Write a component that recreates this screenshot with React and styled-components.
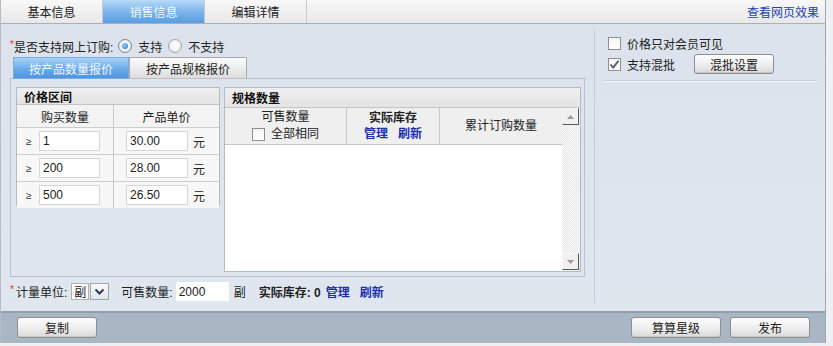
import React from 'react';
import styled, { createGlobalStyle, css } from 'styled-components';

const Global = createGlobalStyle`
  html, body { margin: 0; padding: 0; background: #eef0f3; }
  body {
    font-family: "Liberation Sans", "Noto Sans CJK SC", sans-serif;
    font-size: 12px;
    color: #222;
  }
  * { box-sizing: border-box; }
`;

const Frame = styled.div`
  width: 826px;
  height: 343px;
  display: flex;
  flex-direction: column;
  background: linear-gradient(#dbe2ec, #e1e7ef);
  border-left: 1px solid #b4bcc6;
  border-right: 1px solid #9ea8b3;
`;

const TabBar = styled.div`
  height: 24px;
  display: flex;
  background: linear-gradient(#f8f8f8, #e8e8e8);
  border-bottom: 1px solid #a9b0b8;
`;

const Tab = styled.div`
  width: 102px;
  display: flex;
  align-items: center;
  justify-content: center;
  font-size: 12px;
  border-right: 1px solid #c9c9c9;
  color: #222;
  ${(p) =>
    p.$active &&
    css`
      background: linear-gradient(#b8daf8, #78b2ea 55%, #5a9de2);
      color: #eef6ff;
    `}
`;

const ViewLink = styled.a`
  margin-left: auto;
  padding-right: 6px;
  align-self: center;
  color: #2342b0;
  text-decoration: none;
  font-size: 12px;
`;

const Body = styled.div`
  flex: 1;
  display: flex;
`;

const LeftPane = styled.div`
  width: 594px;
  margin: 6px 0 8px 0;
  padding: 7px 0 0 9px;
  border-right: 1px solid #c3cbd4;
  display: flex;
  flex-direction: column;
`;

const Row = styled.div`
  display: flex;
  align-items: center;
  height: ${(p) => p.$h || 18}px;
  margin-top: ${(p) => p.$mt || 0}px;
  white-space: nowrap;
`;

const Star = styled.span`
  color: #e0362c;
  font-size: 10px;
  align-self: flex-start;
  margin-top: 2px;
  width: ${(p) => p.$w || 4}px;
`;

const Text = styled.span`
  margin-left: ${(p) => p.$ml || 0}px;
  font-weight: ${(p) => (p.$bold ? 'bold' : 'normal')};
  color: ${(p) => p.$color || 'inherit'};
`;

const RadioDot = styled.span`
  display: inline-block;
  width: 14px;
  height: 14px;
  border-radius: 50%;
  border: 1px solid ${(p) => (p.$on ? '#6f8aa3' : '#a3a3a3')};
  background: radial-gradient(circle at 50% 40%, #ffffff, #e4e4e4);
  position: relative;
  margin-left: ${(p) => p.$ml || 0}px;
  ${(p) =>
    p.$on &&
    css`
      &::after {
        content: '';
        position: absolute;
        left: 3px;
        top: 3px;
        width: 6px;
        height: 6px;
        border-radius: 50%;
        background: radial-gradient(circle at 40% 35%, #8fd0ff, #1e78d0);
      }
    `}
`;

const SegTabs = styled.div`
  display: flex;
  margin-top: 2px;
  margin-left: 3px;
  height: 22px;
  position: relative;
  z-index: 1;
`;

const Seg = styled.div`
  width: ${(p) => p.$w}px;
  display: flex;
  align-items: center;
  justify-content: center;
  font-size: 12px;
  ${(p) =>
    p.$active
      ? css`
          background: linear-gradient(#a8d2f7, #6aaaea 55%, #4f94dc);
          color: #eef6ff;
          border: 1px solid #7aaee0;
        `
      : css`
          background: linear-gradient(#fbfbfb, #ececec 55%, #dcdcdc);
          border: 1px solid #a9a9a9;
          border-bottom-color: #c0c0c0;
          border-radius: 0 2px 0 0;
          color: #222;
        `}
`;

const Box = styled.div`
  width: 575px;
  height: 199px;
  border: 1px solid #bac2cb;
  margin-top: -1px;
  padding: 8px 3px 4px 5px;
  display: flex;
  align-items: flex-start;
  gap: 4px;
`;

const Table = styled.div`
  width: ${(p) => p.$w}px;
  height: ${(p) => p.$h}px;
  border: 1px solid #b5bbc2;
  display: flex;
  flex-direction: column;
  background: ${(p) => p.$bg || '#f6f6f6'};
`;

const TableTitle = styled.div`
  height: ${(p) => p.$h}px;
  flex: none;
  background: linear-gradient(#efefef, #e4e4e4);
  border-bottom: 1px solid #c4c4c4;
  font-weight: bold;
  padding-left: ${(p) => p.$pl}px;
  display: flex;
  align-items: center;
  color: #111;
`;

const PriceGrid = styled.div`
  display: grid;
  grid-template-columns: 97px 1fr;
  grid-auto-rows: ${(p) => p.$h}px;
  background: ${(p) => p.$bg};
  border-bottom: ${(p) => (p.$last ? 'none' : '1px solid #cdcdcd')};
`;

const Cell = styled.div`
  display: flex;
  align-items: center;
  justify-content: ${(p) => (p.$center ? 'center' : 'flex-start')};
  padding-left: ${(p) => p.$pl || 0}px;
  border-right: ${(p) => (p.$div ? '1px solid #c8c8c8' : 'none')};
`;

const Ge = styled.span`
  font-size: 10px;
  width: 13px;
  color: #333;
`;

const Input = styled.input`
  width: ${(p) => p.$w}px;
  height: ${(p) => p.$h || 20}px;
  border: 1px solid #d6d6d6;
  background: #fff;
  font-family: "Liberation Sans", sans-serif;
  font-size: 12px;
  color: #222;
  padding: 0 3px;
  outline: none;
  margin: 0;
`;

const Unit = styled.span`
  margin-left: ${(p) => p.$ml || 5}px;
`;

const SpecBody = styled.div`
  flex: 1;
  display: flex;
`;

const SpecCols = styled.div`
  flex: 1;
  display: flex;
  flex-direction: column;
`;

const ColHeads = styled.div`
  height: 37px;
  display: grid;
  grid-template-columns: 122px 93px 1fr;
  background: #efefef;
  border-bottom: 1px solid #c6c6c6;
`;

const HeadCell = styled.div`
  display: flex;
  flex-direction: column;
  align-items: center;
  justify-content: center;
  border-right: ${(p) => (p.$div ? '1px solid #c8c8c8' : 'none')};
  line-height: 16px;
`;

const Links = styled.span`
  display: flex;
  gap: 10px;
  color: #1b2fae;
  font-weight: bold;
`;

const Check = styled.span`
  display: inline-flex;
  width: 13px;
  height: 13px;
  border: 1px solid #8f8f8f;
  background: linear-gradient(#f4f4f4, #ffffff);
  margin-right: ${(p) => p.$mr || 5}px;
  align-items: center;
  justify-content: center;
`;

const Scroll = styled.div`
  width: 18px;
  display: flex;
  flex-direction: column;
  justify-content: space-between;
  background-color: #f6f6f6;
  background-image: repeating-conic-gradient(#e6e6e6 0% 25%, #fbfbfb 0% 50%);
  background-size: 2px 2px;
  padding-bottom: 1px;
`;

const ScrollBtn = styled.div`
  width: 17px;
  height: 17px;
  background: #f0f0f0;
  border: 1px solid #f8f8f8;
  border-right-color: #5a5a5a;
  border-bottom-color: #5a5a5a;
  display: flex;
  align-items: center;
  justify-content: center;
`;

const SelectWrap = styled.span`
  display: inline-flex;
  height: 17px;
  margin-left: 4px;
`;

const SelectVal = styled.span`
  width: 18px;
  background: #fff;
  border: 1px solid #b0b0b0;
  display: flex;
  align-items: center;
  justify-content: center;
`;

const SelectBtn = styled.span`
  width: 19px;
  margin-left: 1px;
  border: 1px solid #9aa6b3;
  background: linear-gradient(#fafafa, #e2e6ea);
  display: flex;
  align-items: center;
  justify-content: center;
`;

const RightPane = styled.div`
  flex: 1;
  padding: 12px 0 0 13px;
  display: flex;
  flex-direction: column;
`;

const Etched = styled.div`
  margin-top: 6px;
  margin-left: -4px;
  width: 213px;
  height: 2px;
  border-top: 1px solid #c4ccd5;
  border-bottom: 1px solid #f4f6f9;
`;

const Button = styled.button`
  width: ${(p) => p.$w}px;
  height: ${(p) => p.$h || 21}px;
  margin-left: ${(p) => p.$ml || 0}px;
  border: 1px solid #8b8f94;
  border-radius: 3px;
  background: linear-gradient(#fefefe, #efefef 50%, #dadada);
  font-family: "Liberation Sans", "Noto Sans CJK SC", sans-serif;
  font-size: 12px;
  color: #222;
  padding: 0;
  display: flex;
  align-items: center;
  justify-content: center;
  box-shadow: inset 0 -1px 0 #c8c8c8;
`;

const Footer = styled.div`
  height: 32px;
  border-top: 2px solid #929eac;
  background: #a9b6c4;
  display: flex;
  align-items: flex-start;
  padding: 4px 15px 0 16px;
  gap: 9px;
`;

const Spacer = styled.div`
  flex: 1;
`;

const Tick = () => (
  <svg width="11" height="11" viewBox="0 0 11 11">
    <path d="M1.5 5.5 L4.2 8.5 L9.5 1.8" fill="none" stroke="#4a5a70" strokeWidth="1.8" />
  </svg>
);

const Arrow = ({ up }) => (
  <svg width="7" height="4" viewBox="0 0 7 4">
    <path d={up ? 'M0 4 L3.5 0 L7 4 Z' : 'M0 0 L7 0 L3.5 4 Z'} fill="#9a9a9a" />
  </svg>
);

const Chevron = () => (
  <svg width="11" height="8" viewBox="0 0 11 8">
    <path d="M1.5 1.5 L5.5 5.5 L9.5 1.5" fill="none" stroke="#2d3a55" strokeWidth="2" />
  </svg>
);

const prices = [
  { q: '1', p: '30.00' },
  { q: '200', p: '28.00' },
  { q: '500', p: '26.50' },
];

export default function App() {
  return (
    <>
      <Global />
      <Frame>
        <TabBar>
          <Tab>基本信息</Tab>
          <Tab $active>销售信息</Tab>
          <Tab>编辑详情</Tab>
          <ViewLink href="#">查看网页效果</ViewLink>
        </TabBar>
        <Body>
          <LeftPane>
            <Row $h={18}>
              <Star>*</Star>
              <Text>是否支持网上订购:</Text>
              <RadioDot $on $ml={5} />
              <Text $ml={6}>支持</Text>
              <RadioDot $ml={6} />
              <Text $ml={6}>不支持</Text>
            </Row>
            <SegTabs>
              <Seg $active $w={116}>按产品数量报价</Seg>
              <Seg $w={118}>按产品规格报价</Seg>
            </SegTabs>
            <Box>
              <Table $w={204} $h={119}>
                <TableTitle $h={17} $pl={7}>价格区间</TableTitle>
                <PriceGrid $h={22} $bg="#f3f3f3">
                  <Cell $center $div>购买数量</Cell>
                  <Cell $center>产品单价</Cell>
                </PriceGrid>
                {prices.map((r, i) => (
                  <PriceGrid key={r.q} $h={26} $bg="#f7f7f7" $last={i === prices.length - 1}>
                    <Cell $div $pl={9}>
                      <Ge>≥</Ge>
                      <Input $w={61} defaultValue={r.q} />
                    </Cell>
                    <Cell $pl={12}>
                      <Input $w={62} defaultValue={r.p} />
                      <Unit>元</Unit>
                    </Cell>
                  </PriceGrid>
                ))}
              </Table>
              <Table $w={357} $h={185} $bg="#fff">
                <TableTitle $h={20} $pl={7}>规格数量</TableTitle>
                <SpecBody>
                  <SpecCols>
                    <ColHeads>
                      <HeadCell $div>
                        <span>可售数量</span>
                        <Row $h={18}>
                          <Check $mr={6} />
                          <span>全部相同</span>
                        </Row>
                      </HeadCell>
                      <HeadCell $div>
                        <Text $bold>实际库存</Text>
                        <Links>
                          <span>管理</span>
                          <span>刷新</span>
                        </Links>
                      </HeadCell>
                      <HeadCell>累计订购数量</HeadCell>
                    </ColHeads>
                  </SpecCols>
                  <Scroll>
                    <ScrollBtn>
                      <Arrow up />
                    </ScrollBtn>
                    <ScrollBtn>
                      <Arrow />
                    </ScrollBtn>
                  </Scroll>
                </SpecBody>
              </Table>
            </Box>
            <Row $h={19} $mt={5}>
              <Star $w={6}>*</Star>
              <Text>计量单位:</Text>
              <SelectWrap>
                <SelectVal>副</SelectVal>
                <SelectBtn>
                  <Chevron />
                </SelectBtn>
              </SelectWrap>
              <Text $ml={12}>可售数量:</Text>
              <Input $w={53} $h={19} defaultValue="2000" style={{ marginLeft: 3, border: 'none' }} />
              <Text $ml={5}>副</Text>
              <Text $ml={13} $bold>实际库存: 0</Text>
              <Links style={{ marginLeft: 5 }}>
                <span>管理</span>
                <span>刷新</span>
              </Links>
            </Row>
          </LeftPane>
          <RightPane>
            <Row $h={14}>
              <Check $mr={6} />
              <span>价格只对会员可见</span>
            </Row>
            <Row $h={20} $mt={4}>
              <Check $mr={6}>
                <Tick />
              </Check>
              <span>支持混批</span>
              <Button $w={80} $h={20} $ml={19}>混批设置</Button>
            </Row>
            <Etched />
          </RightPane>
        </Body>
        <Footer>
          <Button $w={80}>复制</Button>
          <Spacer />
          <Button $w={90}>算算星级</Button>
          <Button $w={80}>发布</Button>
        </Footer>
      </Frame>
    </>
  );
}
